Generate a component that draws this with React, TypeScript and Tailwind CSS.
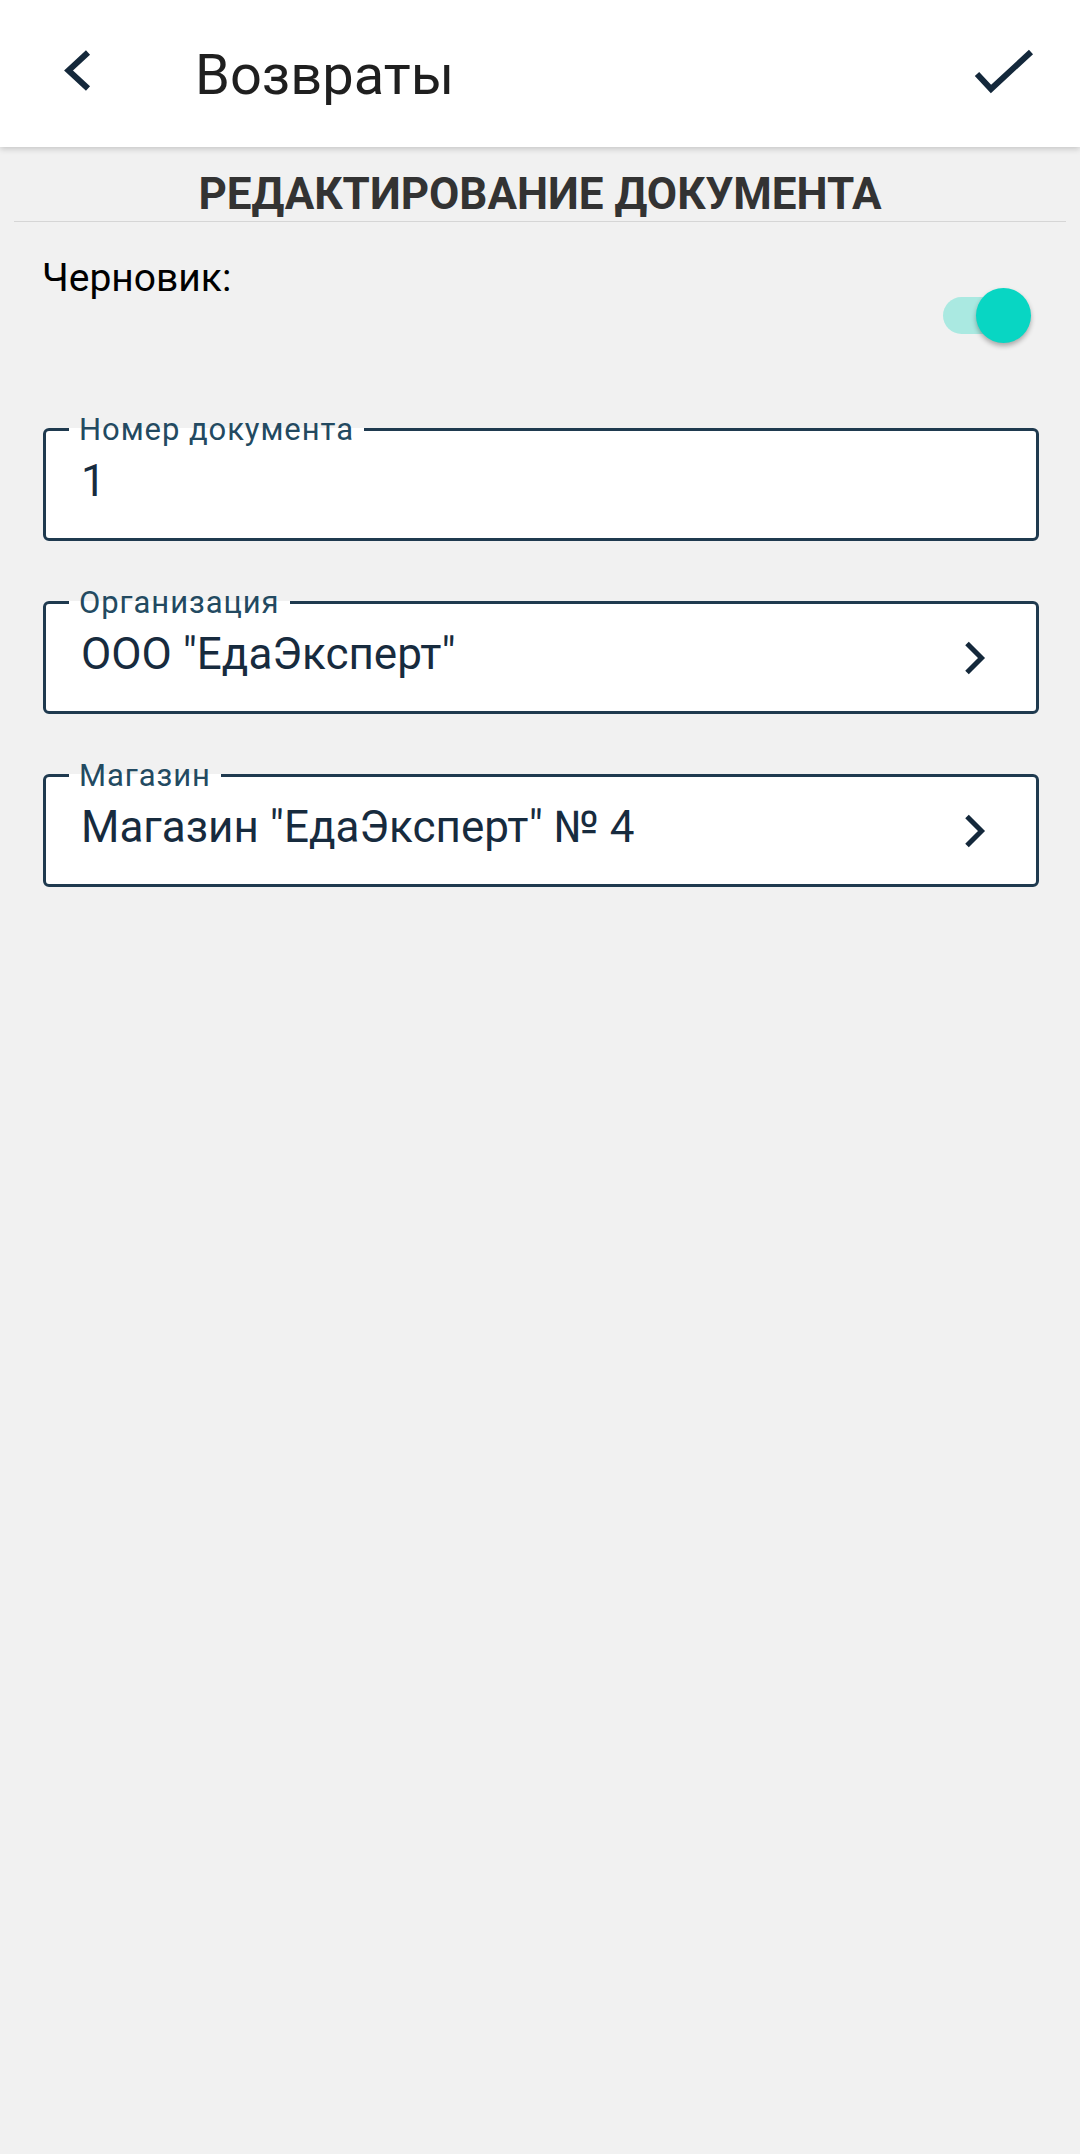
import React from "react";

function Field({ label, value, arrow }: { label: string; value: string; arrow?: boolean }) {
  return (
    <fieldset className="ml-[43px] mr-[41px] border-[3px] border-[#1f3a4f] rounded-[6px] bg-white">
      <legend className="ml-[23px] px-[10px] text-[31px] leading-none tracking-[0.03em] text-[#234a61]">{label}</legend>
      <div className="flex items-center h-[93px] pl-[35px] pr-[50px] pb-[21px]">
        <span className="flex-1 text-[44px] leading-none text-[#172b3e]">{value}</span>
        {arrow && (
          <svg className="mt-[8px]" width="22" height="34" viewBox="0 0 22 34">
            <path d="M3 2.5 L17.5 17 L3 31.5" fill="none" stroke="#14283b" strokeWidth="5" />
          </svg>
        )}
      </div>
    </fieldset>
  );
}

export default function App() {
  return (
    <div className="min-h-[2154px] bg-[#f1f1f1] font-['Roboto',sans-serif]">
      <header className="relative z-10 h-[147px] bg-white shadow-[0_2px_6px_rgba(0,0,0,0.18)] flex items-start">
        <svg className="ml-[62px] mt-[47px]" width="32" height="48" viewBox="0 0 32 48">
          <path d="M26 5.5 L6.5 23.5 L26 41.5" fill="none" stroke="#14283b" strokeWidth="6" />
        </svg>
        <h1 className="ml-[101px] mt-[47px] text-[56px] leading-none text-[#1f1f1f]">Возвраты</h1>
        <svg className="ml-auto mr-[44px] mt-[46px]" width="66" height="52" viewBox="0 0 66 52">
          <path d="M7 28 L21 43 L61 6" fill="none" stroke="#14283b" strokeWidth="6" />
        </svg>
      </header>

      <div className="pt-[25px]">
        <h2 className="text-center text-[44px] font-bold leading-none text-[#333333]">
          РЕДАКТИРОВАНИЕ ДОКУМЕНТА
        </h2>
        <div className="mt-[5px] mx-[14px] h-px bg-[#d6d6d6]" />
      </div>

      <div className="mt-[37px] flex items-start pl-[42px] pr-[49px]">
        <span className="flex-1 text-[39px] leading-none text-black">Черновик:</span>
        <div className="relative mt-[29px] w-[90px] h-[55px] flex items-center">
          <div className="ml-[2px] w-[84px] h-[37px] rounded-full bg-[#aae9e1]" />
          <div className="absolute right-0 top-0 w-[55px] h-[55px] rounded-full bg-[#08d6c3] shadow-[0_3px_5px_rgba(0,0,0,0.3)]" />
        </div>
      </div>

      <div className="mt-[71px] flex flex-col gap-[46px]">
        <Field label="Номер документа" value="1" />
        <Field label="Организация" value={'ООО "ЕдаЭксперт"'} arrow />
        <Field label="Магазин" value={'Магазин "ЕдаЭксперт" № 4'} arrow />
      </div>
    </div>
  );
}
